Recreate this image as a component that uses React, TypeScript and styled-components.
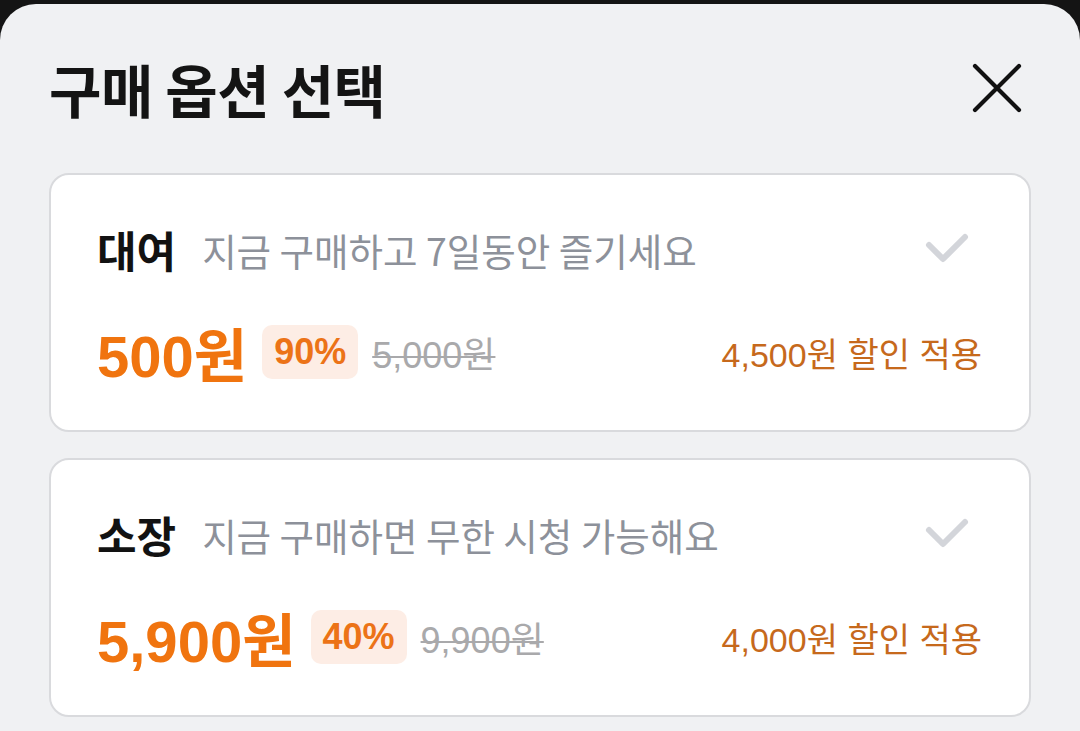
import React from "react";
import styled, { createGlobalStyle } from "styled-components";

const Global = createGlobalStyle`
  html, body { margin: 0; padding: 0; background: #141414; }
  body { font-family: "Liberation Sans", "Noto Sans CJK KR", sans-serif; }
  * { box-sizing: border-box; }
`;

const Sheet = styled.div`
  margin-top: 4px;
  min-height: 727px;
  background: #f0f1f3;
  border-radius: 36px 36px 0 0;
  padding: 44px 49px 0 49px;
  display: flex;
  flex-direction: column;
`;

const Header = styled.div`
  height: 80px;
  display: flex;
  align-items: center;
  justify-content: space-between;
  padding: 0 8px 0 0;
  margin-bottom: 45px;
`;

const Title = styled.h1`
  margin: 0;
  font-family: "Noto Sans CJK KR", sans-serif;
  font-size: 57px;
  font-weight: 700;
  color: #141414;
  letter-spacing: -0.5px;
`;

const CloseButton = styled.button`
  width: 52px;
  height: 52px;
  border: 0;
  padding: 0;
  background: transparent;
  display: flex;
  align-items: center;
  justify-content: center;
`;

const List = styled.div`
  display: flex;
  flex-direction: column;
  gap: 26px;
`;

const Card = styled.div`
  background: #fff;
  border: 2px solid #d9dadd;
  border-radius: 20px;
  height: 259px;
  padding: 48px 47px 50px 46px;
  display: flex;
  flex-direction: column;
  justify-content: space-between;
`;

const TopRow = styled.div`
  display: flex;
  align-items: center;
  height: 52px;
`;

const OptionName = styled.span`
  font-family: "Noto Sans CJK KR", sans-serif;
  font-size: 43px;
  font-weight: 700;
  color: #121212;
  margin-right: 26px;
`;

const OptionDesc = styled.span`
  font-family: "Noto Sans CJK KR", sans-serif;
  font-size: 37.5px;
  color: #8d919a;
  flex: 1;
`;

const Check = styled.svg`
  width: 48px;
  height: 36px;
  margin-right: 11px;
`;

const PriceRow = styled.div`
  display: flex;
  align-items: center;
  height: 56px;
`;

const Price = styled.span`
  font-size: 58px;
  font-weight: 700;
  color: #f0740f;
  margin-right: 15px;
`;

const Badge = styled.span`
  height: 54px;
  padding: 0 12px;
  border-radius: 10px;
  background: #fdede5;
  color: #ec7317;
  font-size: 36px;
  font-weight: 700;
  display: flex;
  align-items: center;
  margin-right: 14px;
`;

const Original = styled.span`
  font-size: 36px;
  color: #a9a9ab;
  text-decoration: line-through;
  text-decoration-thickness: 2px;
  flex: 1;
`;

const Saving = styled.span`
  font-size: 34px;
  color: #c6691c;
`;

const options = [
  { name: "대여", desc: "지금 구매하고 7일동안 즐기세요", price: "500원", pct: "90%", orig: "5,000원", save: "4,500원 할인 적용" },
  { name: "소장", desc: "지금 구매하면 무한 시청 가능해요", price: "5,900원", pct: "40%", orig: "9,900원", save: "4,000원 할인 적용" },
];

export default function App() {
  return (
    <>
      <Global />
      <Sheet>
        <Header>
          <Title>구매 옵션 선택</Title>
          <CloseButton aria-label="닫기">
            <svg width="52" height="52" viewBox="0 0 52 52">
              <path d="M4 4 L48 48 M48 4 L4 48" stroke="#111" strokeWidth="4.2" strokeLinecap="round" fill="none" />
            </svg>
          </CloseButton>
        </Header>
        <List>
          {options.map((o) => (
            <Card key={o.name}>
              <TopRow>
                <OptionName>{o.name}</OptionName>
                <OptionDesc>{o.desc}</OptionDesc>
                <Check viewBox="0 0 48 36">
                  <path d="M6 14 L20 28 L42 6" stroke="#d3d5da" strokeWidth="6" strokeLinecap="round" strokeLinejoin="round" fill="none" />
                </Check>
              </TopRow>
              <PriceRow>
                <Price>{o.price}</Price>
                <Badge>{o.pct}</Badge>
                <Original>{o.orig}</Original>
                <Saving>{o.save}</Saving>
              </PriceRow>
            </Card>
          ))}
        </List>
      </Sheet>
    </>
  );
}
